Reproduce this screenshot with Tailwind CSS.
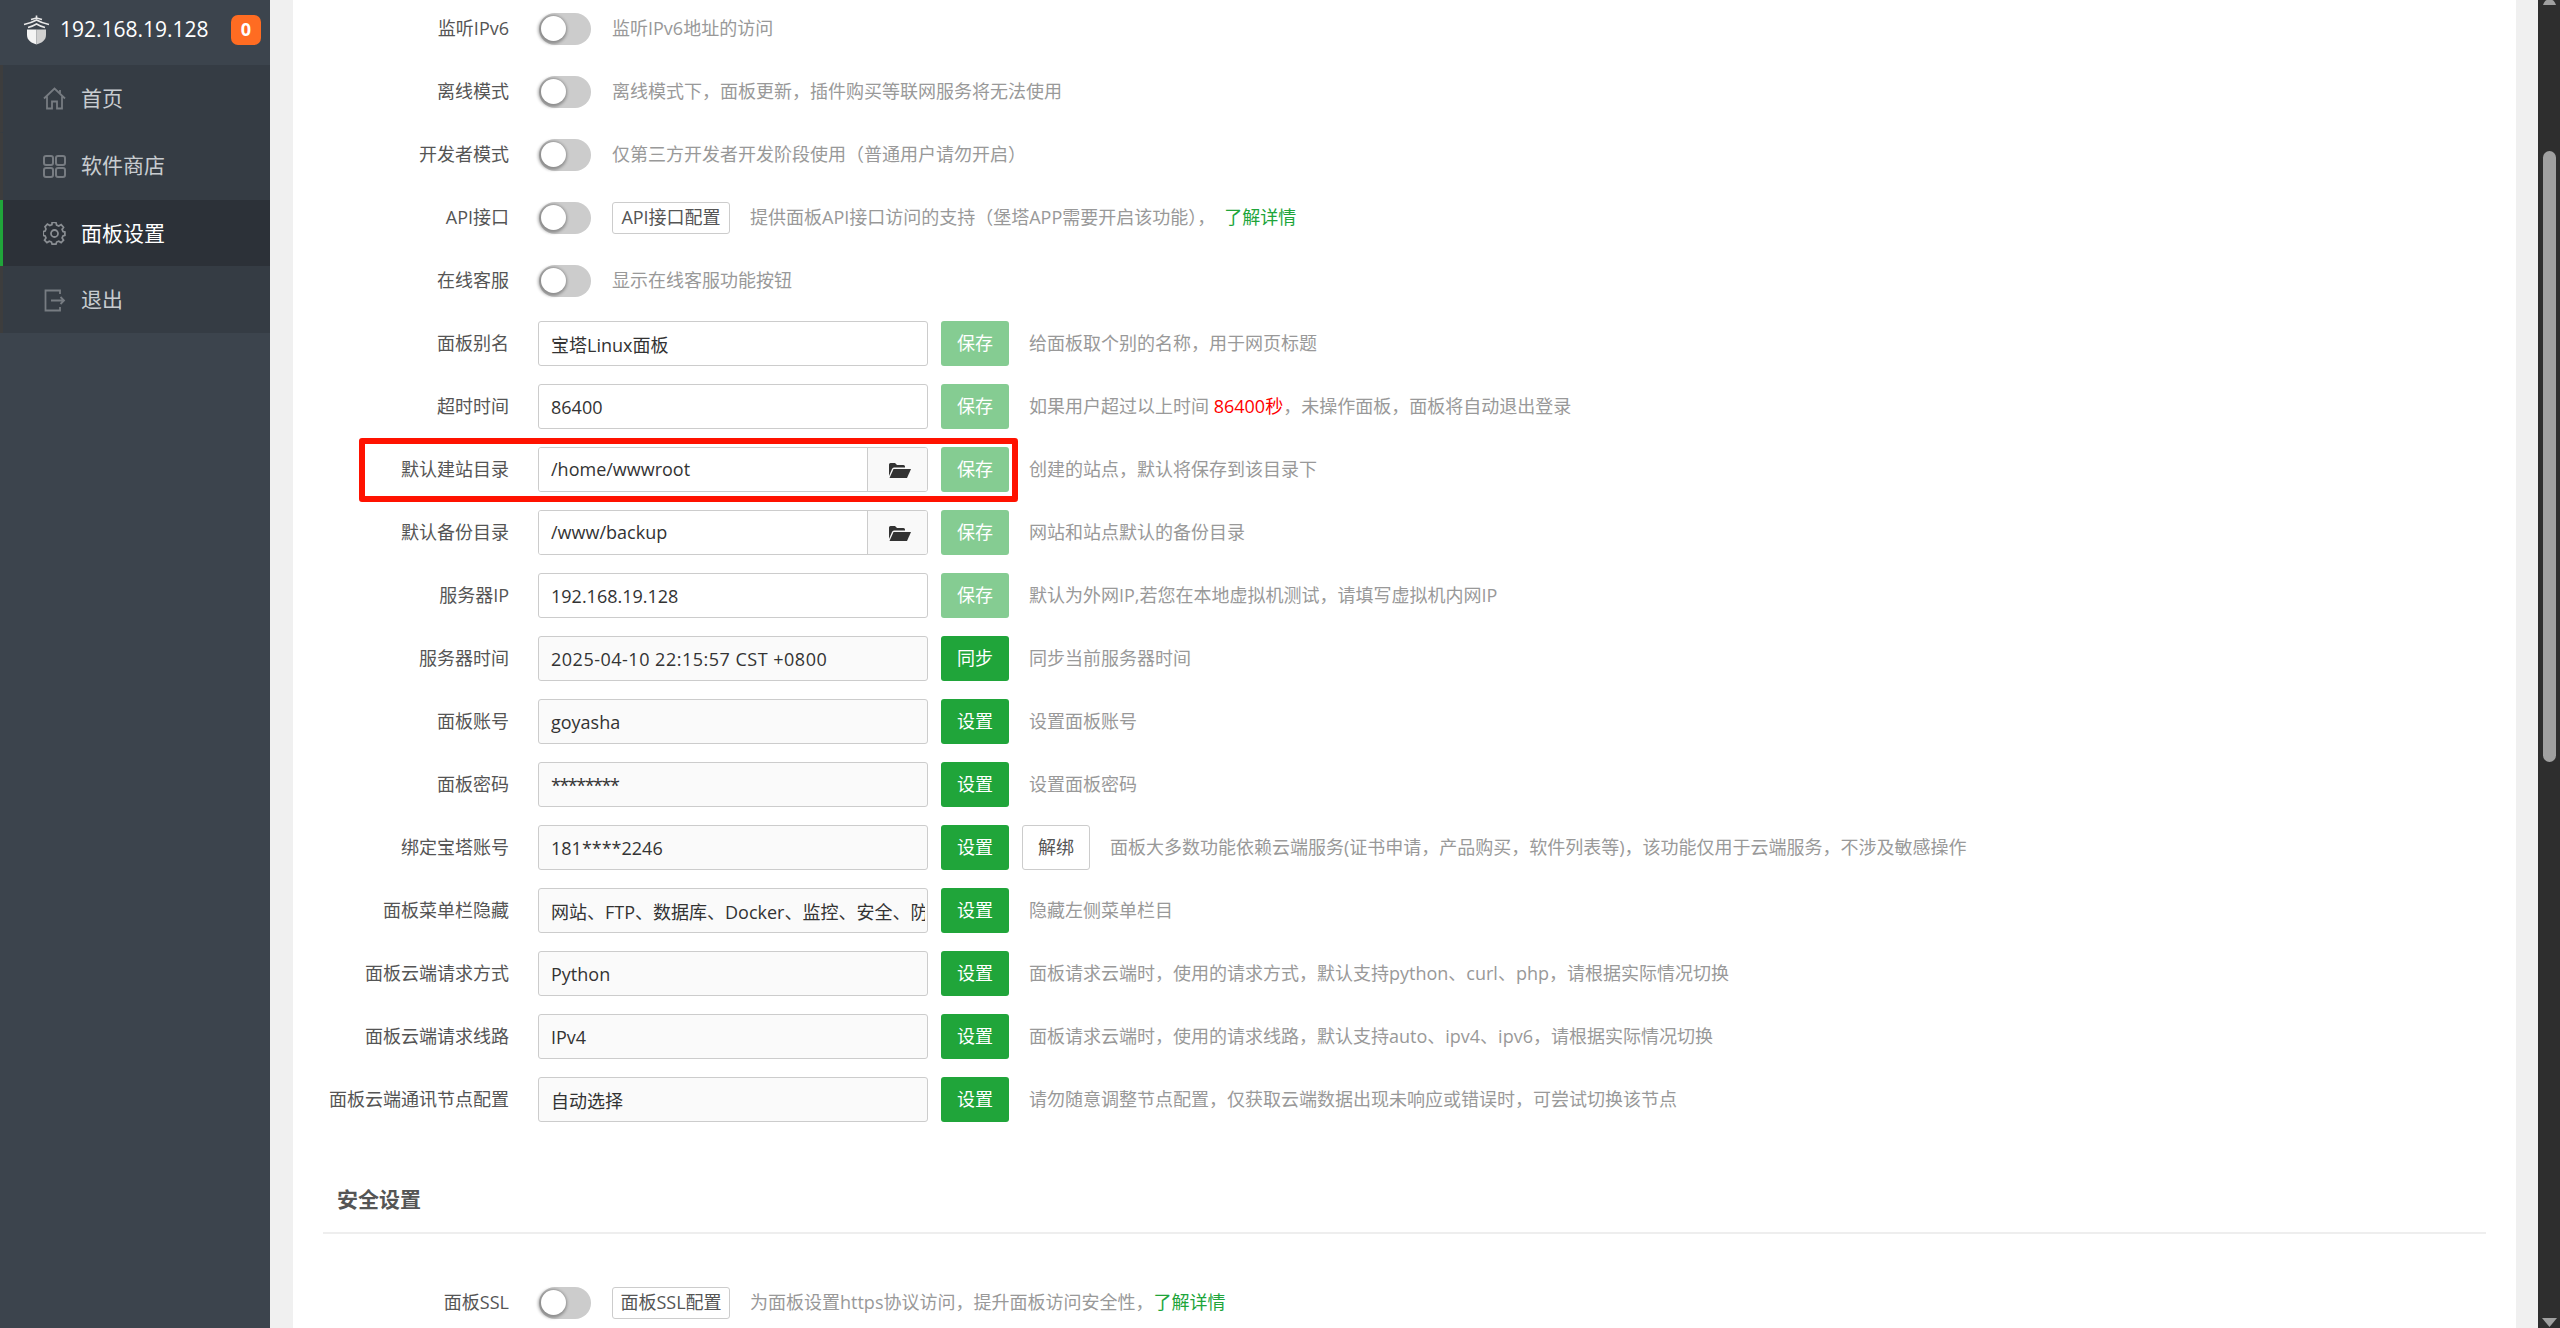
<!DOCTYPE html>
<html lang="zh-CN">
<head>
  <meta charset="UTF-8" />
  <title>面板设置</title>
  <script src="https://cdn.jsdelivr.net/npm/@tailwindcss/browser@4"></script>
</head>
<body class="h-screen overflow-hidden flex bg-[#f0f0f0] text-[18px] text-[#555] font-['Open_Sans','Noto_Sans_CJK_SC',sans-serif]">
  <!-- Sidebar -->
  <aside class="w-[270px] shrink-0 bg-[#3c444d]">
    <div class="h-[65px] flex items-center pl-[23px] pb-[6px]">
      <svg class="w-[27px] h-[30px]" viewBox="0 0 27 30">
        <path d="M13.5 0.5v3M8 4.500L13.500 3L19 4.500M1 9.500C6 8.500 10 7 13.500 5C17 7 21 8.500 26 9.500M5 12.500C8 11.800 11 10.500 13.500 9C16 10.500 19 11.800 22 12.500" fill="none" stroke="#e8e8e8" stroke-width="1.600"/>
        <path d="M4 14.500H13.500V29.500C8 28 4 25 4 20Z" fill="#f4f4f4"/>
        <path d="M13.500 14.500H23V20C23 25 19 28 13.500 29.500Z" fill="#d0d0d0"/>
      </svg>
      <span class="ml-[10px] text-[21px] text-white">192.168.19.128</span>
      <span class="ml-auto mr-[9px] w-[30px] h-[30px] rounded-[7px] bg-[#ff6c22] text-white font-bold text-[18px] flex items-center justify-center">0</span>
    </div>
    <nav class="bg-[#353c44] text-[21px] text-[#c8ccd0]">
      <a class="h-[67px] flex items-center pl-[43px] border-l-[3px] border-[#3d3d3d]">
        <svg class="w-[23px] h-[23px] -ml-[3px] shrink-0" viewBox="0 0 23 23" fill="none" stroke="#777c82" stroke-width="1.800"><path d="M1 11.500L11.500 1.500L22 11.500M4 9.500V21.500H9V14.500H14V21.500H19V9.500"/><path d="M17 3V6" /></svg>
        <span class="ml-[15px]">首页</span>
      </a>
      <a class="h-[68px] flex items-center pl-[43px] pb-[1px] border-l-[3px] border-t border-[#3d3d3d] border-t-[#353c44]">
        <svg class="w-[23px] h-[23px] -ml-[3px] shrink-0" viewBox="0 0 23 23" fill="none" stroke="#777c82" stroke-width="2"><rect x="1" y="1" width="9" height="9" rx="2"/><rect x="13" y="1" width="9" height="9" rx="2"/><rect x="1" y="13" width="9" height="9" rx="2"/><rect x="13" y="13" width="9" height="9" rx="2"/></svg>
        <span class="ml-[15px]">软件商店</span>
      </a>
      <a class="h-[66px] flex items-center pl-[43px] pt-[1px] border-l-[3px] border-[#20a53a] bg-[#2c3138] text-white">
        <svg class="w-[23px] h-[23px] -ml-[3px] shrink-0" viewBox="0 0 23 23" fill="none" stroke="#8a8e93" stroke-width="1.800"><path d="M9.500 1.500h4l.7 2.800 2.200.9 2.500-1.500 2.500 2.800-1.500 2.300.9 2.200 2 .5v3.500l-2 .5-.9 2.200 1.500 2.300-2.500 2.500-2.500-1.500-2.200.9-.7 2.300h-4l-.7-2.300-2.200-.9-2.500 1.500-2.500-2.500 1.500-2.300-.9-2.200-2-.5V11l2-.5.9-2.200L2.100 6l2.500-2.800 2.500 1.500 2.200-.9z" transform="translate(0 -1) scale(.96)"/><circle cx="11.500" cy="11.500" r="3.500"/></svg>
        <span class="ml-[15px]">面板设置</span>
      </a>
      <a class="h-[67px] flex items-center pl-[43px] pt-[1px] border-l-[3px] border-[#3d3d3d]">
        <svg class="w-[23px] h-[23px] -ml-[3px] shrink-0" viewBox="0 0 23 23" fill="none" stroke="#777c82" stroke-width="1.800"><path d="M17 5V1.500H2.500V21.500H17V18M8 11.500H21M17.500 8L21 11.500L17.500 15"/></svg>
        <span class="ml-[15px]">退出</span>
      </a>
    </nav>
  </aside>

  <!-- Main Content -->
  <main class="flex-1 pl-[23px] pr-[22px] min-w-0">
    <div class="h-full bg-white pt-[6px] overflow-hidden">
      <div class="flex items-center h-[45px] mb-[18px]">
        <label class="w-[216px] text-right mr-[30px] shrink-0">监听IPv6</label>
        <span class="w-[52px] h-[32px] rounded-full bg-[#ccc] flex items-center pl-[2px] shrink-0"><span class="block w-[25px] h-[25px] rounded-full bg-white shadow-[-1px_1px_3px_2px_rgba(0,0,0,0.3)]"></span></span>
        <span class="ml-[21px] text-[#999]">监听IPv6地址的访问</span>
      </div>
      <div class="flex items-center h-[45px] mb-[18px]">
        <label class="w-[216px] text-right mr-[30px] shrink-0">离线模式</label>
        <span class="w-[52px] h-[32px] rounded-full bg-[#ccc] flex items-center pl-[2px] shrink-0"><span class="block w-[25px] h-[25px] rounded-full bg-white shadow-[-1px_1px_3px_2px_rgba(0,0,0,0.3)]"></span></span>
        <span class="ml-[21px] text-[#999]">离线模式下，面板更新，插件购买等联网服务将无法使用</span>
      </div>
      <div class="flex items-center h-[45px] mb-[18px]">
        <label class="w-[216px] text-right mr-[30px] shrink-0">开发者模式</label>
        <span class="w-[52px] h-[32px] rounded-full bg-[#ccc] flex items-center pl-[2px] shrink-0"><span class="block w-[25px] h-[25px] rounded-full bg-white shadow-[-1px_1px_3px_2px_rgba(0,0,0,0.3)]"></span></span>
        <span class="ml-[21px] text-[#999]">仅第三方开发者开发阶段使用（普通用户请勿开启）</span>
      </div>
      <div class="flex items-center h-[45px] mb-[18px]">
        <label class="w-[216px] text-right mr-[30px] shrink-0">API接口</label>
        <span class="w-[52px] h-[32px] rounded-full bg-[#ccc] flex items-center pl-[2px] shrink-0"><span class="block w-[25px] h-[25px] rounded-full bg-white shadow-[-1px_1px_3px_2px_rgba(0,0,0,0.3)]"></span></span>
        <button class="ml-[21px] w-[118px] h-[32px] border border-[#ccc] rounded-[3px] bg-white text-[#555]">API接口配置</button>
        <span class="ml-[20px] text-[#999]">提供面板API接口访问的支持（堡塔APP需要开启该功能），<a class="ml-[9px] text-[#20a53a]">了解详情</a></span>
      </div>
      <div class="flex items-center h-[45px] mb-[18px]">
        <label class="w-[216px] text-right mr-[30px] shrink-0">在线客服</label>
        <span class="w-[52px] h-[32px] rounded-full bg-[#ccc] flex items-center pl-[2px] shrink-0"><span class="block w-[25px] h-[25px] rounded-full bg-white shadow-[-1px_1px_3px_2px_rgba(0,0,0,0.3)]"></span></span>
        <span class="ml-[21px] text-[#999]">显示在线客服功能按钮</span>
      </div>

      <div class="flex items-center h-[45px] mb-[18px]">
        <label class="w-[216px] text-right mr-[29px] shrink-0">面板别名</label>
        <input readonly value="宝塔Linux面板" class="w-[390px] h-[45px] border border-[#ccc] rounded-[3px] bg-white text-[#333] pl-[12px] pr-[2px]" />
        <button class="ml-[13px] w-[68px] h-[45px] rounded-[3px] bg-[#85cc92] text-white">保存</button>
        <span class="ml-[20px] text-[#999]">给面板取个别的名称，用于网页标题</span>
      </div>
      <div class="flex items-center h-[45px] mb-[18px]">
        <label class="w-[216px] text-right mr-[29px] shrink-0">超时时间</label>
        <input readonly value="86400" class="w-[390px] h-[45px] border border-[#ccc] rounded-[3px] bg-white text-[#333] pl-[12px] pr-[2px]" />
        <button class="ml-[13px] w-[68px] h-[45px] rounded-[3px] bg-[#85cc92] text-white">保存</button>
        <span class="ml-[20px] text-[#999]">如果用户超过以上时间 <b class="font-normal text-[#f00]">86400秒</b>，未操作面板，面板将自动退出登录</span>
      </div>
      <div class="flex items-center h-[45px] mb-[18px] relative">
        <!-- red annotation box drawn over the row -->
        <div class="absolute left-[66px] top-[-9px] w-[659px] h-[64px] border-[6px] border-[#ff1200] rounded-[3px]"></div>
        <label class="w-[216px] text-right mr-[29px] shrink-0">默认建站目录</label>
        <div class="w-[390px] h-[45px] flex border border-[#ccc] rounded-[3px] overflow-hidden">
          <input readonly value="/home/wwwroot" class="flex-1 min-w-0 bg-white text-[#333] pl-[12px]" />
          <span class="w-[60px] flex items-center justify-center pl-[3px] bg-[#f9f9f9] border-l border-[#ccc]">
            <svg class="w-[23px] h-[16px]" viewBox="0 0 23 16" fill="#333"><path d="M1 14V2.500Q1 1 2.500 1H7L9 3H15.500Q17 3 17 4.500V5.500H6Q4.500 5.500 4 7Z"/><path d="M5.500 7H23L19 16H1.500Z"/></svg>
          </span>
        </div>
        <button class="ml-[13px] w-[68px] h-[45px] rounded-[3px] bg-[#85cc92] text-white">保存</button>
        <span class="ml-[20px] text-[#999]">创建的站点，默认将保存到该目录下</span>
      </div>
      <div class="flex items-center h-[45px] mb-[18px]">
        <label class="w-[216px] text-right mr-[29px] shrink-0">默认备份目录</label>
        <div class="w-[390px] h-[45px] flex border border-[#ccc] rounded-[3px] overflow-hidden">
          <input readonly value="/www/backup" class="flex-1 min-w-0 bg-white text-[#333] pl-[12px]" />
          <span class="w-[60px] flex items-center justify-center pl-[3px] bg-[#f9f9f9] border-l border-[#ccc]">
            <svg class="w-[23px] h-[16px]" viewBox="0 0 23 16" fill="#333"><path d="M1 14V2.500Q1 1 2.500 1H7L9 3H15.500Q17 3 17 4.500V5.500H6Q4.500 5.500 4 7Z"/><path d="M5.500 7H23L19 16H1.500Z"/></svg>
          </span>
        </div>
        <button class="ml-[13px] w-[68px] h-[45px] rounded-[3px] bg-[#85cc92] text-white">保存</button>
        <span class="ml-[20px] text-[#999]">网站和站点默认的备份目录</span>
      </div>
      <div class="flex items-center h-[45px] mb-[18px]">
        <label class="w-[216px] text-right mr-[29px] shrink-0">服务器IP</label>
        <input readonly value="192.168.19.128" class="w-[390px] h-[45px] border border-[#ccc] rounded-[3px] bg-white text-[#333] pl-[12px] pr-[2px]" />
        <button class="ml-[13px] w-[68px] h-[45px] rounded-[3px] bg-[#85cc92] text-white">保存</button>
        <span class="ml-[20px] text-[#999]">默认为外网IP,若您在本地虚拟机测试，请填写虚拟机内网IP</span>
      </div>
      <div class="flex items-center h-[45px] mb-[18px]">
        <label class="w-[216px] text-right mr-[29px] shrink-0">服务器时间</label>
        <input readonly value="2025-04-10 22:15:57 CST +0800" class="w-[390px] h-[45px] border border-[#ccc] rounded-[3px] bg-[#fafafa] text-[#333] tracking-[0.5px] pl-[12px] pr-[2px]" />
        <button class="ml-[13px] w-[68px] h-[45px] rounded-[3px] bg-[#20a53a] text-white">同步</button>
        <span class="ml-[20px] text-[#999]">同步当前服务器时间</span>
      </div>
      <div class="flex items-center h-[45px] mb-[18px]">
        <label class="w-[216px] text-right mr-[29px] shrink-0">面板账号</label>
        <input readonly value="goyasha" class="w-[390px] h-[45px] border border-[#ccc] rounded-[3px] bg-[#fafafa] text-[#333] pl-[12px] pr-[2px]" />
        <button class="ml-[13px] w-[68px] h-[45px] rounded-[3px] bg-[#20a53a] text-white">设置</button>
        <span class="ml-[20px] text-[#999]">设置面板账号</span>
      </div>
      <div class="flex items-center h-[45px] mb-[18px]">
        <label class="w-[216px] text-right mr-[29px] shrink-0">面板密码</label>
        <input readonly value="********" class="w-[390px] h-[45px] border border-[#ccc] rounded-[3px] bg-[#fafafa] text-[#333] tracking-[-1.5px] pl-[12px] pr-[2px]" />
        <button class="ml-[13px] w-[68px] h-[45px] rounded-[3px] bg-[#20a53a] text-white">设置</button>
        <span class="ml-[20px] text-[#999]">设置面板密码</span>
      </div>
      <div class="flex items-center h-[45px] mb-[18px]">
        <label class="w-[216px] text-right mr-[29px] shrink-0">绑定宝塔账号</label>
        <input readonly value="181****2246" class="w-[390px] h-[45px] border border-[#ccc] rounded-[3px] bg-[#fafafa] text-[#333] pl-[12px] pr-[2px]" />
        <button class="ml-[13px] w-[68px] h-[45px] rounded-[3px] bg-[#20a53a] text-white">设置</button>
        <button class="ml-[13px] w-[68px] h-[45px] rounded-[3px] border border-[#ccc] bg-white text-[#555]">解绑</button>
        <span class="ml-[20px] text-[#999]">面板大多数功能依赖云端服务(证书申请，产品购买，软件列表等)，该功能仅用于云端服务，不涉及敏感操作</span>
      </div>
      <div class="flex items-center h-[45px] mb-[18px]">
        <label class="w-[216px] text-right mr-[29px] shrink-0">面板菜单栏隐藏</label>
        <input readonly value="网站、FTP、数据库、Docker、监控、安全、防火墙" class="w-[390px] h-[45px] border border-[#ccc] rounded-[3px] bg-[#fafafa] text-[#333] pl-[12px] pr-[2px]" />
        <button class="ml-[13px] w-[68px] h-[45px] rounded-[3px] bg-[#20a53a] text-white">设置</button>
        <span class="ml-[20px] text-[#999]">隐藏左侧菜单栏目</span>
      </div>
      <div class="flex items-center h-[45px] mb-[18px]">
        <label class="w-[216px] text-right mr-[29px] shrink-0">面板云端请求方式</label>
        <input readonly value="Python" class="w-[390px] h-[45px] border border-[#ccc] rounded-[3px] bg-[#fafafa] text-[#333] pl-[12px] pr-[2px]" />
        <button class="ml-[13px] w-[68px] h-[45px] rounded-[3px] bg-[#20a53a] text-white">设置</button>
        <span class="ml-[20px] text-[#999]">面板请求云端时，使用的请求方式，默认支持python、curl、php，请根据实际情况切换</span>
      </div>
      <div class="flex items-center h-[45px] mb-[18px]">
        <label class="w-[216px] text-right mr-[29px] shrink-0">面板云端请求线路</label>
        <input readonly value="IPv4" class="w-[390px] h-[45px] border border-[#ccc] rounded-[3px] bg-[#fafafa] text-[#333] pl-[12px] pr-[2px]" />
        <button class="ml-[13px] w-[68px] h-[45px] rounded-[3px] bg-[#20a53a] text-white">设置</button>
        <span class="ml-[20px] text-[#999]">面板请求云端时，使用的请求线路，默认支持auto、ipv4、ipv6，请根据实际情况切换</span>
      </div>
      <div class="flex items-center h-[45px]">
        <label class="w-[216px] text-right mr-[29px] shrink-0">面板云端通讯节点配置</label>
        <input readonly value="自动选择" class="w-[390px] h-[45px] border border-[#ccc] rounded-[3px] bg-[#fafafa] text-[#333] pl-[12px] pr-[2px]" />
        <button class="ml-[13px] w-[68px] h-[45px] rounded-[3px] bg-[#20a53a] text-white">设置</button>
        <span class="ml-[20px] text-[#999]">请勿随意调整节点配置，仅获取云端数据出现未响应或错误时，可尝试切换该节点</span>
      </div>

      <!-- Security section -->
      <div class="mt-[62px] mx-[30px] pl-[14px] pb-[18px] border-b-2 border-[#eee]">
        <h3 class="text-[21px] leading-[30px] font-bold text-[#555]">安全设置</h3>
      </div>
      <div class="flex items-center h-[45px] mt-[46px]">
        <label class="w-[216px] text-right mr-[30px] shrink-0">面板SSL</label>
        <span class="w-[52px] h-[32px] rounded-full bg-[#ccc] flex items-center pl-[2px] shrink-0"><span class="block w-[25px] h-[25px] rounded-full bg-white shadow-[-1px_1px_3px_2px_rgba(0,0,0,0.3)]"></span></span>
        <button class="ml-[21px] w-[118px] h-[32px] border border-[#ccc] rounded-[3px] bg-white text-[#555]">面板SSL配置</button>
        <span class="ml-[20px] text-[#999]">为面板设置https协议访问，提升面板访问安全性，<a class="text-[#20a53a]">了解详情</a></span>
      </div>
    </div>
  </main>

  <!-- Scrollbar -->
  <div class="w-[22px] shrink-0 bg-[#2e2e2e] flex flex-col items-center">
    <svg class="w-[15px] h-[5px] shrink-0" viewBox="0 0 15 5" fill="#a0a0a0"><path d="M1 5Q3 0 5 0H10Q12 0 14 5Z"/></svg>
    <div class="mt-[146px] w-[13px] h-[611px] rounded-full bg-[#a0a0a0] shrink-0"></div>
    <svg class="mt-auto mb-[1px] w-[15px] h-[9px] shrink-0" viewBox="0 0 15 9" fill="#a0a0a0"><path d="M0 0H15L7.500 9Z"/></svg>
  </div>
</body>
</html>
